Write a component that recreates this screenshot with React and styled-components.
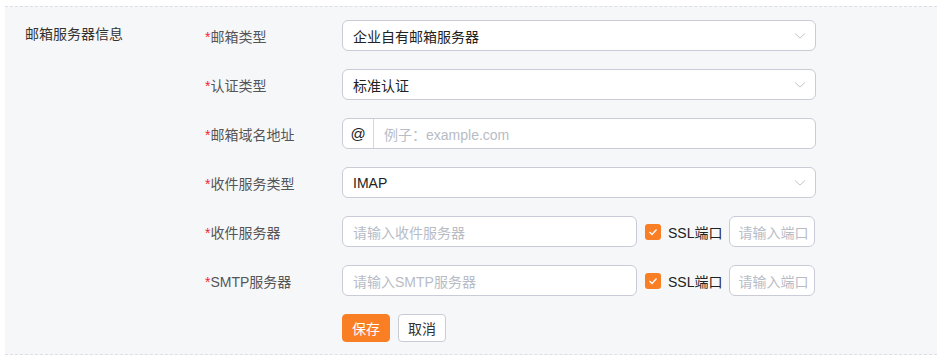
import React from 'react';
import styled, { createGlobalStyle } from 'styled-components';

const GlobalStyle = createGlobalStyle`
  body {
    margin: 0;
    background: #fff;
    font-family: "Liberation Sans", "Noto Sans CJK SC", sans-serif;
    font-size: 14px;
  }
`;

const Page = styled.div`
  padding: 6px 0 4px 5px;
`;

const Panel = styled.section`
  display: flex;
  background: #f6f7f9;
  border-top: 1px dashed #dcdfe6;
  border-bottom: 1px dashed #dcdfe6;
  padding: 13px 0 12px 20px;
`;

const Title = styled.div`
  width: 180px;
  flex-shrink: 0;
  color: #333;
  line-height: 28px;
`;

const Form = styled.div`
  display: flex;
  flex-direction: column;
  gap: 18px;
`;

const Row = styled.div`
  display: flex;
  align-items: center;
  height: 31px;
`;

const Label = styled.label`
  width: 137px;
  flex-shrink: 0;
  color: #555;
  padding-top: 1px;
  &::before {
    content: '*';
    color: #f5222d;
  }
`;

const Control = styled.div`
  display: flex;
  align-items: center;
  width: 474px;
  height: 31px;
`;

const Box = styled.div`
  position: relative;
  display: flex;
  align-items: center;
  box-sizing: border-box;
  height: 31px;
  width: ${(p) => p.width || '100%'};
  flex-shrink: 0;
  background: #fff;
  border: 1px solid #c9ccd6;
  border-radius: 6px;
  overflow: hidden;
`;

const Value = styled.span`
  padding-left: 10px;
  color: #222;
  flex: 1;
`;

const Placeholder = styled.span`
  padding-left: ${(p) => p.pad || '10px'};
  color: #b8bcc6;
  flex: 1;
  white-space: nowrap;
`;

const Prepend = styled.span`
  width: 30px;
  height: 100%;
  display: flex;
  align-items: center;
  justify-content: center;
  border-right: 1px solid #d4d7de;
  color: #222;
  font-size: 15px;
`;

const Arrow = styled.svg`
  position: absolute;
  right: 9px;
  top: 11px;
`;

const Check = styled.span`
  width: 16px;
  height: 16px;
  margin: 0 7px 0 8px;
  border-radius: 3px;
  background: #fa7f24;
  display: flex;
  align-items: center;
  justify-content: center;
  flex-shrink: 0;
`;

const CheckText = styled.span`
  color: #222;
  margin-right: 7px;
  white-space: nowrap;
`;

const Buttons = styled.div`
  display: flex;
  gap: 8px;
  margin-left: 137px;
`;

const Button = styled.button`
  height: 28px;
  width: 48px;
  padding: 0;
  box-sizing: border-box;
  border-radius: 4px;
  font-family: inherit;
  font-size: 14px;
  border: 1px solid ${(p) => (p.primary ? '#fa7f24' : '#c9ccd6')};
  background: ${(p) => (p.primary ? '#fa7f24' : '#fff')};
  color: ${(p) => (p.primary ? '#fff' : '#333')};
`;

const Chevron = () => (
  <Arrow width="12" height="8" viewBox="0 0 12 8">
    <path d="M1 1.5 L6 6 L11 1.5" fill="none" stroke="#c3c6cd" strokeWidth="1" />
  </Arrow>
);

const Tick = () => (
  <svg width="10" height="8" viewBox="0 0 10 8">
    <path d="M1.5 4 L4 6.5 L8.5 1.5" fill="none" stroke="#fff" strokeWidth="1.3" />
  </svg>
);

const Select = ({ value }) => (
  <Box>
    <Value>{value}</Value>
    <Chevron />
  </Box>
);

const ServerRow = ({ label, placeholder }) => (
  <Row>
    <Label>{label}</Label>
    <Control>
      <Box width="295px">
        <Placeholder>{placeholder}</Placeholder>
      </Box>
      <Check>
        <Tick />
      </Check>
      <CheckText>SSL端口</CheckText>
      <Box width="86px">
        <Placeholder pad="8px">请输入端口</Placeholder>
      </Box>
    </Control>
  </Row>
);

export default function App() {
  return (
    <>
      <GlobalStyle />
      <Page>
        <Panel>
          <Title>邮箱服务器信息</Title>
          <Form>
            <Row>
              <Label>邮箱类型</Label>
              <Control>
                <Select value="企业自有邮箱服务器" />
              </Control>
            </Row>
            <Row>
              <Label>认证类型</Label>
              <Control>
                <Select value="标准认证" />
              </Control>
            </Row>
            <Row>
              <Label>邮箱域名地址</Label>
              <Control>
                <Box>
                  <Prepend>@</Prepend>
                  <Placeholder>例子：example.com</Placeholder>
                </Box>
              </Control>
            </Row>
            <Row>
              <Label>收件服务类型</Label>
              <Control>
                <Select value="IMAP" />
              </Control>
            </Row>
            <ServerRow label="收件服务器" placeholder="请输入收件服务器" />
            <ServerRow label="SMTP服务器" placeholder="请输入SMTP服务器" />
            <Buttons>
              <Button primary>保存</Button>
              <Button>取消</Button>
            </Buttons>
          </Form>
        </Panel>
      </Page>
    </>
  );
}
